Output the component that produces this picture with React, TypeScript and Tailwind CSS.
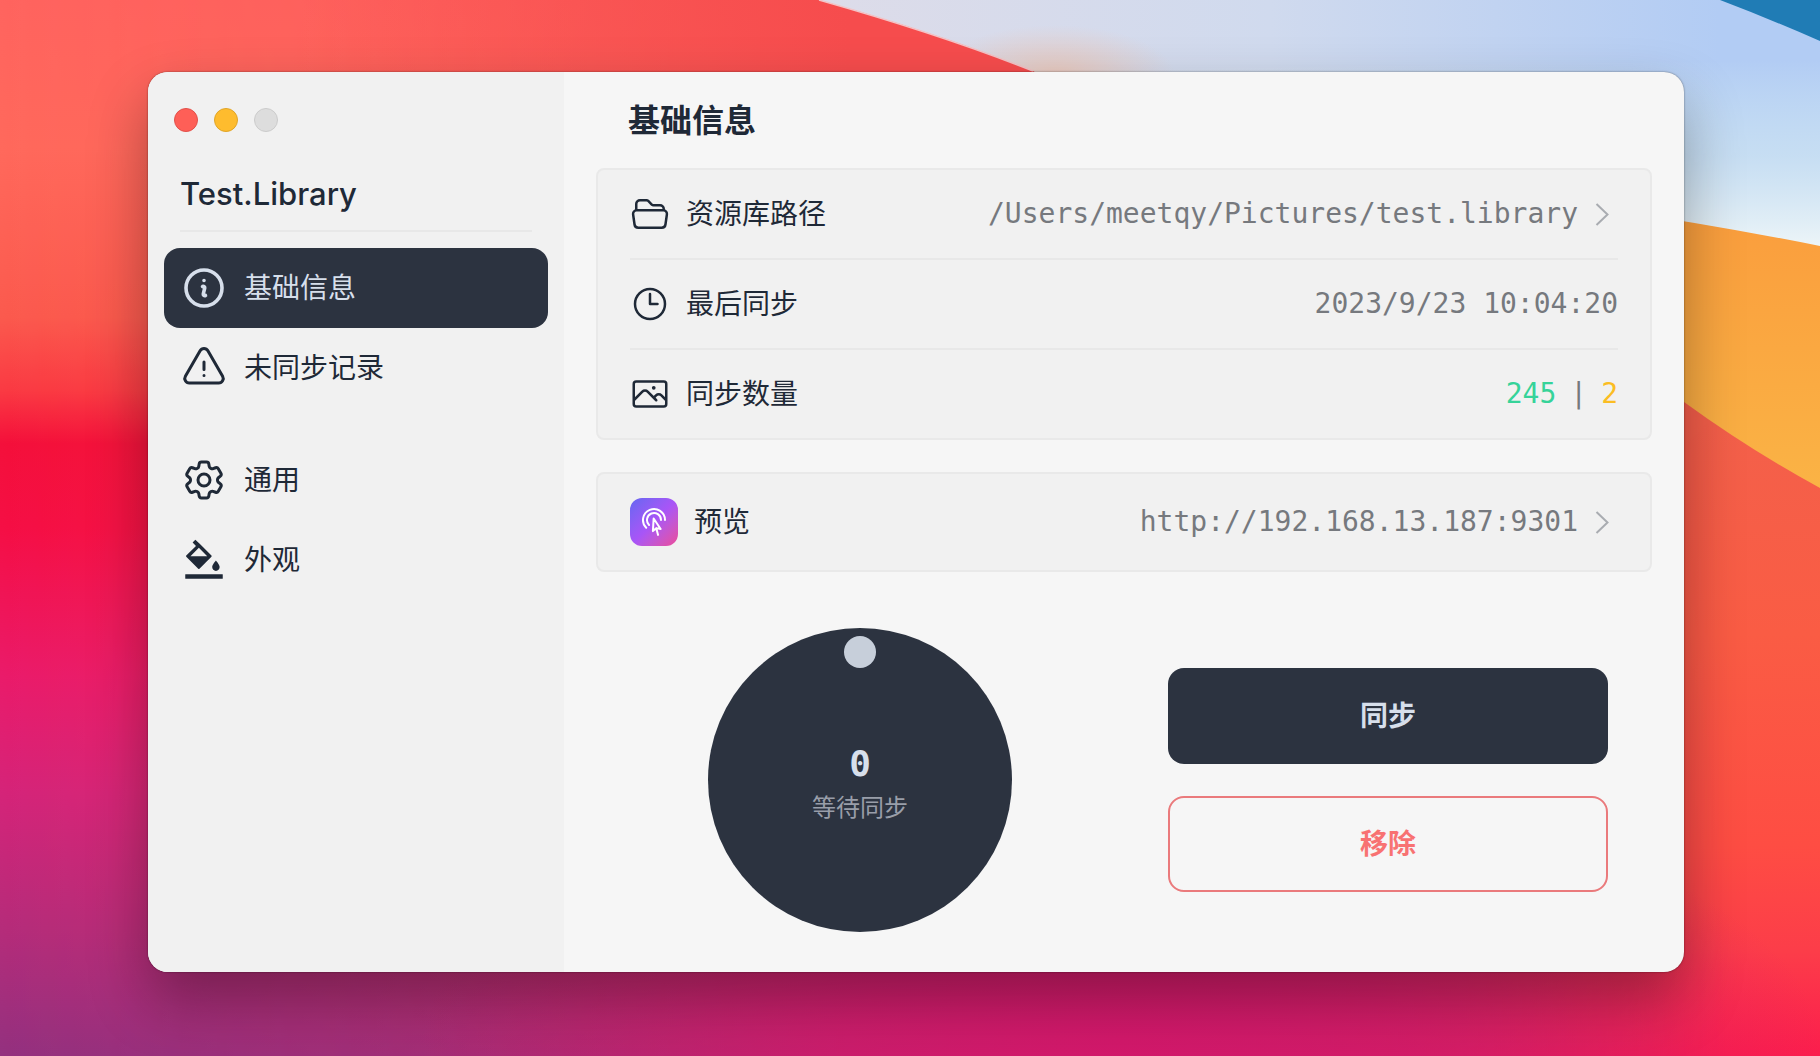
import React, { useState } from 'react';
import { AiOutlineBgColors } from 'react-icons/ai';
import {
  HiOutlineClock,
  HiOutlineCog6Tooth,
  HiOutlineCursorArrowRipple,
  HiOutlineExclamationTriangle,
  HiOutlineFolderOpen,
  HiOutlineInformationCircle,
  HiOutlinePhoto,
} from 'react-icons/hi2';
import clsx from 'clsx';

type PageKey = 'info' | 'pending' | 'general' | 'appearance';

interface NavItem {
  key: PageKey;
  label: string;
  icon: React.ReactNode;
}

const navGroups: NavItem[][] = [
  [
    { key: 'info', label: '基础信息', icon: <HiOutlineInformationCircle size={48} strokeWidth={1.8} /> },
    { key: 'pending', label: '未同步记录', icon: <HiOutlineExclamationTriangle size={48} /> },
  ],
  [
    { key: 'general', label: '通用', icon: <HiOutlineCog6Tooth size={48} /> },
    { key: 'appearance', label: '外观', icon: <AiOutlineBgColors size={48} /> },
  ],
];

const Wallpaper = () => (
  <svg
    className="absolute inset-0 h-full w-full"
    viewBox="0 0 1820 1056"
    preserveAspectRatio="none"
    aria-hidden="true"
  >
    <defs>
      <linearGradient id="left" x1="0" y1="0" x2="0" y2="1">
        <stop offset="0" stopColor="#ff645f" />
        <stop offset=".14" stopColor="#ff695c" />
        <stop offset=".3" stopColor="#fb5a4e" />
        <stop offset=".37" stopColor="#fa3a43" />
        <stop offset=".42" stopColor="#f4103b" />
        <stop offset=".5" stopColor="#f50f45" />
        <stop offset=".64" stopColor="#ea1b6a" />
        <stop offset=".75" stopColor="#d52479" />
        <stop offset=".88" stopColor="#b52c7a" />
        <stop offset="1" stopColor="#93317f" />
      </linearGradient>
      <linearGradient id="right" x1="0" y1="0" x2="0" y2="1">
        <stop offset="0" stopColor="#f84a4e" />
        <stop offset=".4" stopColor="#f3604a" />
        <stop offset=".6" stopColor="#fa5c44" />
        <stop offset=".8" stopColor="#fe4d43" />
        <stop offset=".9" stopColor="#fc3d49" />
        <stop offset="1" stopColor="#fb1d4d" />
      </linearGradient>
      <linearGradient id="fade" x1="0" y1="0" x2="1" y2="0">
        <stop offset="0" stopColor="#000" />
        <stop offset=".5" stopColor="#555" />
        <stop offset=".8" stopColor="#aaa" />
        <stop offset=".95" stopColor="#fff" />
      </linearGradient>
      <mask id="fadeMask">
        <rect width="1820" height="1056" fill="url(#fade)" />
      </mask>
      <radialGradient id="magenta">
        <stop offset="0" stopColor="#d3186b" />
        <stop offset=".4" stopColor="#d3186b" stopOpacity=".75" />
        <stop offset="1" stopColor="#d3186b" stopOpacity="0" />
      </radialGradient>
      <linearGradient id="ridge" gradientUnits="userSpaceOnUse" x1="300" y1="0" x2="850" y2="0">
        <stop offset="0" stopColor="#f64c4d" stopOpacity="0" />
        <stop offset="1" stopColor="#f64c4d" />
      </linearGradient>
      <linearGradient id="sky" gradientUnits="userSpaceOnUse" x1="820" y1="0" x2="1720" y2="0">
        <stop offset="0" stopColor="#dddce9" />
        <stop offset=".5" stopColor="#d0daee" />
        <stop offset="1" stopColor="#b2ccf4" />
      </linearGradient>
      <linearGradient id="haze" gradientUnits="userSpaceOnUse" x1="0" y1="60" x2="0" y2="250">
        <stop offset="0" stopColor="#d6eef2" stopOpacity="0" />
        <stop offset=".5" stopColor="#cfe5f2" stopOpacity=".7" />
        <stop offset="1" stopColor="#eef6f8" />
      </linearGradient>
      <radialGradient id="peach">
        <stop offset="0" stopColor="#e8c8bd" />
        <stop offset="1" stopColor="#e8c8bd" stopOpacity="0" />
      </radialGradient>
      <linearGradient id="orange" x1="0" y1="0" x2="0" y2="1">
        <stop offset="0" stopColor="#fa9d3d" />
        <stop offset="1" stopColor="#fab345" />
      </linearGradient>
    </defs>
    <rect width="1820" height="1056" fill="url(#left)" />
    <rect width="1820" height="1056" fill="url(#right)" mask="url(#fadeMask)" />
    <ellipse cx="1120" cy="1040" rx="700" ry="260" fill="url(#magenta)" />
    <path d="M819 0C900 23 965 44 1033 71L1400 260H1820V0Z" fill="url(#sky)" />
    <path d="M1033 71L1400 260H1820V60Z" fill="url(#haze)" />
    <ellipse cx="1055" cy="75" rx="120" ry="50" fill="url(#peach)" />
    <path d="M1033 71C965 44 900 23 819 0H300V110H1100Z" fill="url(#ridge)" />
    <path d="M819 0C900 23 965 44 1033 71" fill="none" stroke="#f3c3c6" strokeWidth="1.5" />
    <path d="M1720 0Q1770 19 1820 41V0Z" fill="#207cb5" />
    <path d="M1600 208Q1720 226 1820 246V488Q1750 450 1684 402L1600 340Z" fill="url(#orange)" />
  </svg>
);

const Chevron = () => (
  <svg width="32" height="32" viewBox="0 0 32 32" fill="none" className="shrink-0 text-[#a9acb1]" aria-hidden="true">
    <path d="M10.5 6L21.5 16.5L10.5 27" stroke="currentColor" strokeWidth="2" />
  </svg>
);

const rowClass = 'flex w-full items-center justify-between';
const valueClass = 'font-[DejaVu_Sans_Mono,monospace] text-[28px] leading-10 text-[#76797e]';

export default function App() {
  const [page, setPage] = useState<PageKey>('info');

  return (
    <div className="relative min-h-screen overflow-hidden bg-[#f4103b] pt-[72px] pr-[136px] pb-[84px] pl-[148px] font-[Inter,Noto_Sans_CJK_SC,sans-serif] text-[#1f2937]">
      <Wallpaper />

      {/* App window */}
      <div className="relative flex overflow-hidden rounded-[20px] bg-[#f6f6f6] shadow-[0_0_2px_rgba(0,0,0,0.5),0_28px_60px_rgba(0,0,0,0.33)]">
        <aside className="w-[416px] shrink-0 bg-[#f1f1f1] px-4">
          <div className="flex gap-4 px-[10px] pt-9">
            <button aria-label="关闭" className="size-6 rounded-full border border-[#e2504a] bg-[#fe5f57]" />
            <button aria-label="最小化" className="size-6 rounded-full border border-[#e0a528] bg-[#febc2e]" />
            <button aria-label="缩放" disabled className="size-6 rounded-full border border-[#cbcbcb] bg-[#dddddd]" />
          </div>

          <h2 className="mx-4 mt-[38px] border-b-2 border-[#e8e8e8] pb-3 text-[31px] leading-12 font-medium">
            Test.Library
          </h2>

          <nav className="mt-4 flex flex-col gap-8">
            {navGroups.map((group, i) => (
              <div key={i} className="flex flex-col">
                {group.map((item) => (
                  <button
                    key={item.key}
                    onClick={() => setPage(item.key)}
                    className={clsx(
                      'flex h-20 items-center gap-4 rounded-2xl px-4 text-left text-[28px]',
                      page === item.key && 'bg-[#2c3340] text-[#d7dfeb]'
                    )}
                  >
                    {item.icon}
                    <span>{item.label}</span>
                  </button>
                ))}
              </div>
            ))}
          </nav>
        </aside>

        <main className="min-w-0 flex-1 px-8">
          <h1 className="flex h-24 items-center px-8 pt-[2px] text-[32px] font-semibold">基础信息</h1>

          <section className="rounded-lg border-2 border-[#e9e9e9] bg-[#f1f1f1] px-8">
            <button className={clsx(rowClass, 'h-[90px] border-b-2 border-[#e8e8e8]')}>
              <span className="flex items-center gap-4 text-[28px]">
                <HiOutlineFolderOpen size={40} />
                资源库路径
              </span>
              <span className="flex items-center gap-2">
                <span className={valueClass}>/Users/meetqy/Pictures/test.library</span>
                <Chevron />
              </span>
            </button>
            <div className={clsx(rowClass, 'h-[90px] border-b-2 border-[#e8e8e8]')}>
              <span className="flex items-center gap-4 text-[28px]">
                <HiOutlineClock size={40} />
                最后同步
              </span>
              <span className={valueClass}>2023/9/23 10:04:20</span>
            </div>
            <div className={clsx(rowClass, 'h-[88px]')}>
              <span className="flex items-center gap-4 text-[28px]">
                <HiOutlinePhoto size={40} />
                同步数量
              </span>
              <span className={valueClass}>
                <span className="text-[#36d399]">245</span>
                <span className="mx-[14px]">|</span>
                <span className="text-[#fbbd23]">2</span>
              </span>
            </div>
          </section>

          <section className="mt-8 rounded-lg border-2 border-[#e9e9e9] bg-[#f1f1f1] px-8">
            <a href="http://192.168.13.187:9301" className={clsx(rowClass, 'h-24')}>
              <span className="flex items-center gap-4 text-[28px]">
                <span className="rounded-xl bg-linear-to-br from-[#6366f1] via-[#a855f7] to-[#ec4899] p-2 text-white">
                  <HiOutlineCursorArrowRipple size={32} />
                </span>
                预览
              </span>
              <span className="flex items-center gap-2">
                <span className={valueClass}>http://192.168.13.187:9301</span>
                <Chevron />
              </span>
            </a>
          </section>

          {/* Sync progress and actions */}
          <section className="grid grid-cols-2 items-center pt-14 pb-10">
            <div className="relative mx-auto flex size-[304px] flex-col items-center justify-center rounded-full bg-[#2c3340]">
              <span className="absolute top-2 left-1/2 size-8 -translate-x-1/2 rounded-full bg-[#c7cfda]" />
              <span className="mt-2 font-[DejaVu_Sans_Mono,monospace] text-[36px] leading-12 font-bold text-[#d7dfeb]">0</span>
              <span className="text-2xl leading-10 text-[#999ea9]">等待同步</span>
            </div>
            <div className="flex flex-col gap-8 px-11">
              <button className="h-24 rounded-2xl bg-[#2c3340] text-[28px] font-bold text-[#d7dfeb]">同步</button>
              <button className="h-24 rounded-2xl border-2 border-[#ea7a7c] text-[28px] font-bold text-[#f87272]">
                移除
              </button>
            </div>
          </section>
        </main>
      </div>
    </div>
  );
}
